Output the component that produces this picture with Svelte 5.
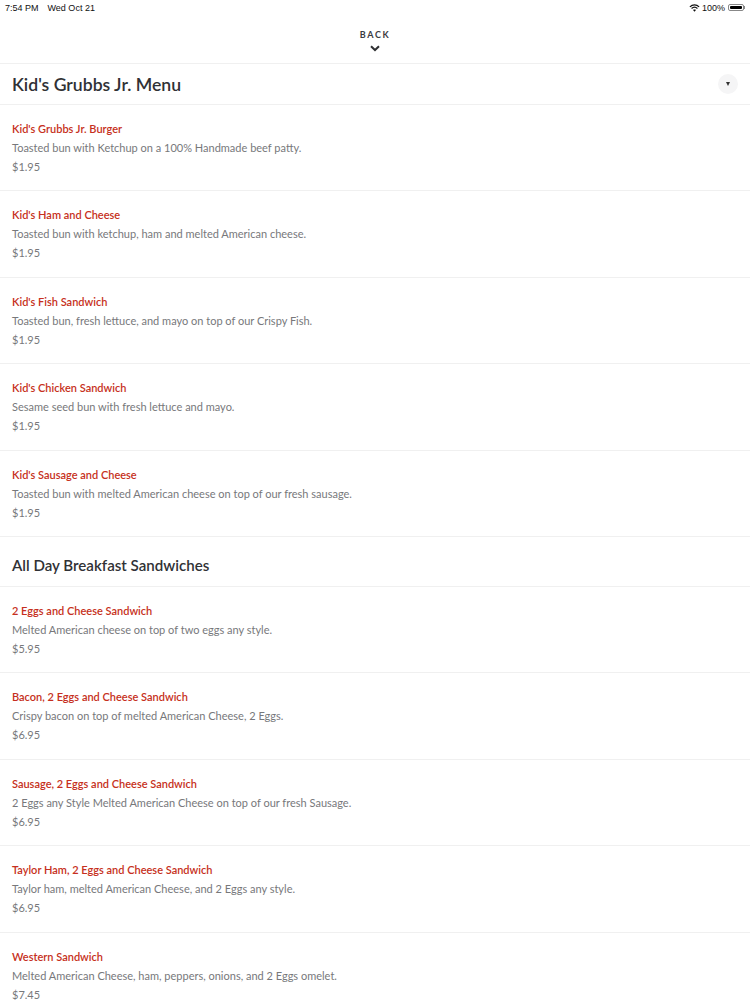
<script>
	const kids = [
		{ name: "Kid's Grubbs Jr. Burger", desc: 'Toasted bun with Ketchup on a 100% Handmade beef patty.', price: '$1.95' },
		{ name: "Kid's Ham and Cheese", desc: 'Toasted bun with ketchup, ham and melted American cheese.', price: '$1.95' },
		{ name: "Kid's Fish Sandwich", desc: 'Toasted bun, fresh lettuce, and mayo on top of our Crispy Fish.', price: '$1.95' },
		{ name: "Kid's Chicken Sandwich", desc: 'Sesame seed bun with fresh lettuce and mayo.', price: '$1.95' },
		{ name: "Kid's Sausage and Cheese", desc: 'Toasted bun with melted American cheese on top of our fresh sausage.', price: '$1.95' }
	];

	const breakfast = [
		{ name: '2 Eggs and Cheese Sandwich', desc: 'Melted American cheese on top of two eggs any style.', price: '$5.95' },
		{ name: 'Bacon, 2 Eggs and Cheese Sandwich', desc: 'Crispy bacon on top of melted American Cheese, 2 Eggs.', price: '$6.95' },
		{ name: 'Sausage, 2 Eggs and Cheese Sandwich', desc: '2 Eggs any Style Melted American Cheese on top of our fresh Sausage.', price: '$6.95' },
		{ name: 'Taylor Ham, 2 Eggs and Cheese Sandwich', desc: 'Taylor ham, melted American Cheese, and 2 Eggs any style.', price: '$6.95' },
		{ name: 'Western Sandwich', desc: 'Melted American Cheese, ham, peppers, onions, and 2 Eggs omelet.', price: '$7.45' }
	];
</script>

{#snippet row(item)}
	<div class="item">
		<div class="name">{item.name}</div>
		<div class="desc">{item.desc}</div>
		<div class="price">{item.price}</div>
	</div>
{/snippet}

<div class="page">
	<div class="status">
		<div class="clock">
			<span>7:54 PM</span>
			<span>Wed Oct 21</span>
		</div>
		<div class="indicators">
			<svg width="11" height="8" viewBox="0 0 12 9" fill="none" stroke="#111" stroke-width="1.4">
				<path d="M0.8 3.2C3.8 0.3 8.2 0.3 11.2 3.2" />
				<path d="M2.7 5C4.7 3.2 7.3 3.2 9.3 5" />
				<path d="M6 8.8L4.4 6.8C5.3 6.1 6.7 6.1 7.6 6.8Z" fill="#111" stroke="none" />
			</svg>
			<span>100%</span>
			<div class="battery"><div class="charge"></div></div>
			<div class="nub"></div>
		</div>
	</div>

	<div class="back">
		<span>BACK</span>
		<svg width="10" height="7" viewBox="0 0 10 7" fill="none" stroke="#2f3033" stroke-width="2">
			<path d="M1 1.2L5 5L9 1.2" />
		</svg>
	</div>

	<div class="heading first">
		<h1>Kid's Grubbs Jr. Menu</h1>
		<div class="toggle"><div class="arrow"></div></div>
	</div>
	{#each kids as item}
		{@render row(item)}
	{/each}

	<div class="heading second">
		<h2>All Day Breakfast Sandwiches</h2>
	</div>
	{#each breakfast as item}
		{@render row(item)}
	{/each}
</div>

<style>
	:global(body) {
		background: #fff;
	}

	.page {
		height: 1000px;
		overflow: hidden;
		font-family: Lato, sans-serif;
		background: #fff;
	}

	.status {
		display: flex;
		justify-content: space-between;
		align-items: center;
		height: 15px;
		padding: 0 5px;
		font-family: 'Liberation Sans', sans-serif;
		font-size: 9px;
		color: #111;
	}

	.clock {
		display: flex;
		gap: 9px;
	}

	.indicators {
		display: flex;
		align-items: center;
		gap: 2px;
	}

	.battery {
		box-sizing: border-box;
		width: 16px;
		height: 7px;
		padding: 1px;
		border: 0.5px solid #888;
		border-radius: 2px;
		margin-left: 1px;
	}

	.charge {
		height: 100%;
		background: #000;
		border-radius: 1px;
	}

	.nub {
		width: 1px;
		height: 3px;
		margin-left: -2px;
		background: #888;
	}

	.back {
		display: flex;
		flex-direction: column;
		align-items: center;
		height: 49px;
		padding-top: 14px;
		box-sizing: border-box;
		border-bottom: 1px solid #f0f0f0;
		font-size: 9px;
		font-weight: 700;
		letter-spacing: 1.6px;
		line-height: 11px;
		color: #3a3b3f;
	}

	.back svg {
		margin-top: 5px;
	}

	.heading {
		display: flex;
		align-items: center;
		justify-content: space-between;
		padding: 0 12px;
		box-sizing: border-box;
		border-bottom: 1px solid #f0f0f0;
		color: #303135;
	}

	.first {
		height: 41px;
	}

	.second {
		height: 50px;
		padding-top: 8px;
	}

	h1,
	h2 {
		margin: 0;
		font-weight: 600;
	}

	h1 {
		font-size: 17.6px;
	}

	h2 {
		font-size: 15.1px;
	}

	.toggle {
		display: flex;
		align-items: center;
		justify-content: center;
		width: 20px;
		height: 20px;
		border-radius: 50%;
		background: #f5f5f6;
	}

	.arrow {
		border-top: 4px solid #333;
		border-left: 2.5px solid transparent;
		border-right: 2.5px solid transparent;
	}

	.item {
		padding: 14px 12px 14.4px;
		border-bottom: 1px solid #f0f0f0;
		font-size: 11px;
		line-height: 19px;
		color: #77787b;
	}

	.name {
		font-weight: 600;
		color: #c62f20;
	}
</style>
